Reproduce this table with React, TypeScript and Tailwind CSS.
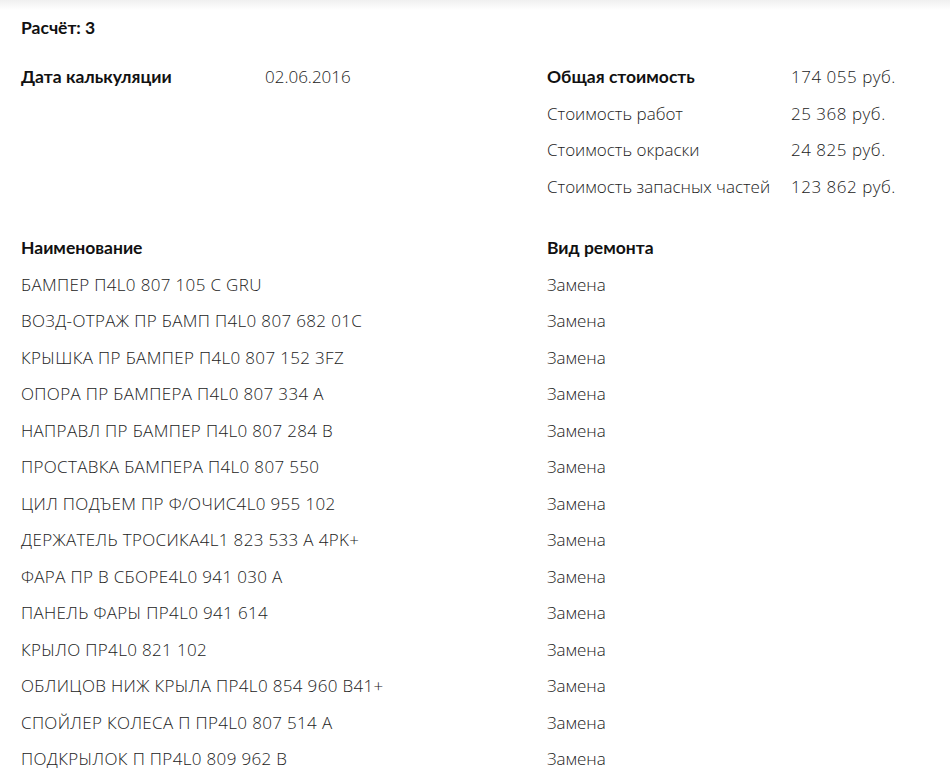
import React from 'react';

const costs = [
  { label: 'Общая стоимость', value: '174 055 руб.', bold: true },
  { label: 'Стоимость работ', value: '25 368 руб.' },
  { label: 'Стоимость окраски', value: '24 825 руб.' },
  { label: 'Стоимость запасных частей', value: '123 862 руб.' },
];

const parts = [
  'БАМПЕР П4L0 807 105 C GRU',
  'ВОЗД-ОТРАЖ ПР БАМП П4L0 807 682 01C',
  'КРЫШКА ПР БАМПЕР П4L0 807 152 3FZ',
  'ОПОРА ПР БАМПЕРА П4L0 807 334 A',
  'НАПРАВЛ ПР БАМПЕР П4L0 807 284 B',
  'ПРОСТАВКА БАМПЕРА П4L0 807 550',
  'ЦИЛ ПОДЪЕМ ПР Ф/ОЧИС4L0 955 102',
  'ДЕРЖАТЕЛЬ ТРОСИКА4L1 823 533 A 4PK+',
  'ФАРА ПР В СБОРЕ4L0 941 030 A',
  'ПАНЕЛЬ ФАРЫ ПР4L0 941 614',
  'КРЫЛО ПР4L0 821 102',
  'ОБЛИЦОВ НИЖ КРЫЛА ПР4L0 854 960 B41+',
  'СПОЙЛЕР КОЛЕСА П ПР4L0 807 514 A',
  'ПОДКРЫЛОК П ПР4L0 809 962 B',
];

// bold labels use Lato, it is narrower than Open Sans bold
const bold = "font-['Lato',sans-serif] font-bold text-[#111] text-[17.5px]";

const App: React.FC = () => {
  return (
    <div className="min-h-screen bg-white text-[#222] font-['Open_Sans',sans-serif] text-[17px] font-light">
      <div className="h-[10px] bg-gradient-to-b from-[#f0f0f0] to-white" />
      <div className="pl-[21px]">
        <h1 className={`${bold} leading-[36px]`}>Расчёт: 3</h1>

        <div className="mt-[13px] flex leading-[36.5px]">
          <div className="w-[526px] flex shrink-0">
            <span className={`w-[244px] ${bold}`}>Дата калькуляции</span>
            <span>02.06.2016</span>
          </div>
          <div>
            {costs.map((c) => (
              <div key={c.label} className="flex">
                <span className={`w-[244px] ${c.bold ? bold : ''}`}>{c.label}</span>
                <span className="tracking-[0.03em]">{c.value}</span>
              </div>
            ))}
          </div>
        </div>

        <div className="mt-[25px] leading-[36.5px]">
          <div className={`flex ${bold}`}>
            <span className="w-[526px] shrink-0">Наименование</span>
            <span>Вид ремонта</span>
          </div>
          {parts.map((p) => (
            <div key={p} className="flex">
              <span className="w-[526px] shrink-0 tracking-[0.02em]">{p}</span>
              <span>Замена</span>
            </div>
          ))}
        </div>
      </div>
    </div>
  );
};

export default App;
